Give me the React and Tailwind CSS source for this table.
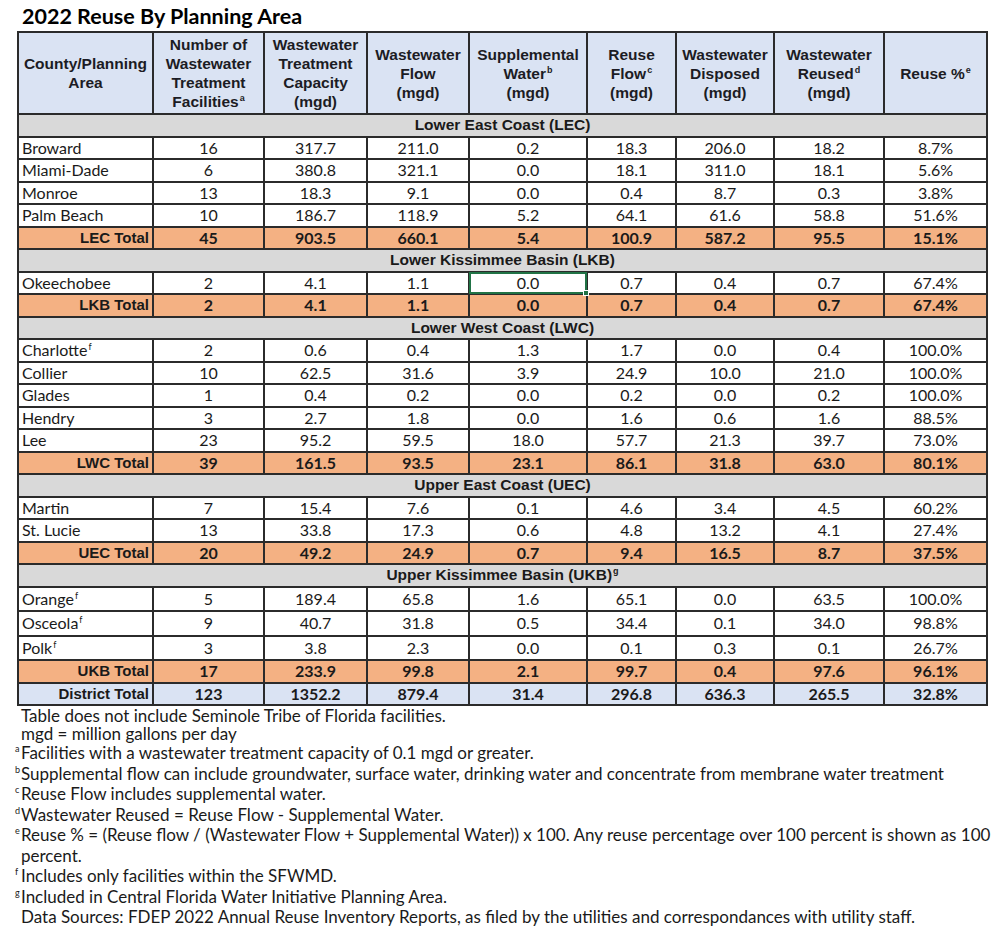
import React from "react";

const sections = [
  {
    title: "Lower East Coast (LEC)",
    rows: [
      ["Broward", "16", "317.7", "211.0", "0.2", "18.3", "206.0", "18.2", "8.7%"],
      ["Miami-Dade", "6", "380.8", "321.1", "0.0", "18.1", "311.0", "18.1", "5.6%"],
      ["Monroe", "13", "18.3", "9.1", "0.0", "0.4", "8.7", "0.3", "3.8%"],
      ["Palm Beach", "10", "186.7", "118.9", "5.2", "64.1", "61.6", "58.8", "51.6%"],
    ],
    total: ["LEC Total", "45", "903.5", "660.1", "5.4", "100.9", "587.2", "95.5", "15.1%"],
  },
  {
    title: "Lower Kissimmee Basin (LKB)",
    rows: [["Okeechobee", "2", "4.1", "1.1", "0.0", "0.7", "0.4", "0.7", "67.4%"]],
    total: ["LKB Total", "2", "4.1", "1.1", "0.0", "0.7", "0.4", "0.7", "67.4%"],
  },
  {
    title: "Lower West Coast (LWC)",
    rows: [
      ["Charlotte", "2", "0.6", "0.4", "1.3", "1.7", "0.0", "0.4", "100.0%", "f"],
      ["Collier", "10", "62.5", "31.6", "3.9", "24.9", "10.0", "21.0", "100.0%"],
      ["Glades", "1", "0.4", "0.2", "0.0", "0.2", "0.0", "0.2", "100.0%"],
      ["Hendry", "3", "2.7", "1.8", "0.0", "1.6", "0.6", "1.6", "88.5%"],
      ["Lee", "23", "95.2", "59.5", "18.0", "57.7", "21.3", "39.7", "73.0%"],
    ],
    total: ["LWC Total", "39", "161.5", "93.5", "23.1", "86.1", "31.8", "63.0", "80.1%"],
  },
  {
    title: "Upper East Coast (UEC)",
    rows: [
      ["Martin", "7", "15.4", "7.6", "0.1", "4.6", "3.4", "4.5", "60.2%"],
      ["St. Lucie", "13", "33.8", "17.3", "0.6", "4.8", "13.2", "4.1", "27.4%"],
    ],
    total: ["UEC Total", "20", "49.2", "24.9", "0.7", "9.4", "16.5", "8.7", "37.5%"],
  },
  {
    title: "Upper Kissimmee Basin (UKB)",
    sup: "g",
    tall: true,
    rows: [
      ["Orange", "5", "189.4", "65.8", "1.6", "65.1", "0.0", "63.5", "100.0%", "f"],
      ["Osceola", "9", "40.7", "31.8", "0.5", "34.4", "0.1", "34.0", "98.8%", "f"],
      ["Polk", "3", "3.8", "2.3", "0.0", "0.1", "0.3", "0.1", "26.7%", "f"],
    ],
    total: ["UKB Total", "17", "233.9", "99.8", "2.1", "99.7", "0.4", "97.6", "96.1%"],
  },
];

const district = ["District Total", "123", "1352.2", "879.4", "31.4", "296.8", "636.3", "265.5", "32.8%"];

const widths = ["w-[135px]", "w-[111px]", "w-[103px]", "w-[102px]", "w-[118px]", "w-[89px]", "w-[98px]", "w-[110px]", "w-[103px]"];

const cell = "border-2 border-[#2b2b2b]";
const label = "font-['Liberation_Sans',Arial,sans-serif]";

// small raised marker, kept off the line box so rows keep their height
function Sup({ children }) {
  return <span className="relative -top-[6px] ml-[1px] text-[9px] leading-none">{children}</span>;
}

function Head({ children }) {
  return (
    <th className={`${cell} ${label} bg-[#dae3f3] text-center align-middle text-[15.5px] leading-[19px] font-bold text-[#1c1c24] px-0`}>
      {children}
    </th>
  );
}

function DataRow({ row, tall, selected }) {
  const [name, ...rest] = row;
  const nums = rest.slice(0, 8);
  const mark = rest[8];
  return (
    <tr className={tall ? "h-[24.5px]" : "h-[22.5px]"}>
      <td className={`${cell} pl-[3px] text-left`}>
        {name}
        {mark && <Sup>{mark}</Sup>}
      </td>
      {nums.map((n, i) => (
        <td key={i} className={`${cell} text-center ${selected && i === 3 ? "relative" : ""}`}>
          {n}
          {selected && i === 3 && (
            <div className="absolute -left-[1px] -top-[1px] -right-[1px] -bottom-[1px] border-2 border-[#217346]">
              <div className="absolute -right-[4px] -bottom-[4px] w-[6px] h-[6px] bg-[#217346] border border-white" />
            </div>
          )}
        </td>
      ))}
    </tr>
  );
}

function TotalRow({ row, bg }) {
  const [name, ...nums] = row;
  return (
    <tr className={`h-[22.5px] ${bg}`}>
      <td className={`${cell} ${label} pr-[3px] text-right font-bold text-[15px]`}>{name}</td>
      {nums.map((n, i) => (
        <td key={i} className={`${cell} text-center font-bold`}>
          {n}
        </td>
      ))}
    </tr>
  );
}

function Note({ mark, children }) {
  return (
    <div className="flex leading-[20.5px]">
      <span className="w-[6px] shrink-0 text-[9px] leading-[12px]">{mark}</span>
      <span>{children}</span>
    </div>
  );
}

export default function App() {
  return (
    <div className="w-[1000px] h-[931px] bg-white pl-[17px] text-[#1a1a1a] font-['Lato','Open_Sans',sans-serif]">
      <h1 className="h-[31px] pl-[5px] pt-[3px] text-[21.5px] leading-[26px] font-bold text-black">
        2022 Reuse By Planning Area
      </h1>

      <table className="w-[969px] table-fixed border-collapse text-[16px] leading-[18px]">
        <colgroup>
          {widths.map((w, i) => (
            <col key={i} className={w} />
          ))}
        </colgroup>
        <thead>
          <tr className="h-[82px]">
            <Head>
              County/Planning
              <br />
              Area
            </Head>
            <Head>
              Number of
              <br />
              Wastewater
              <br />
              Treatment
              <br />
              Facilities<Sup>a</Sup>
            </Head>
            <Head>
              Wastewater
              <br />
              Treatment
              <br />
              Capacity
              <br />
              (mgd)
            </Head>
            <Head>
              Wastewater
              <br />
              Flow
              <br />
              (mgd)
            </Head>
            <Head>
              Supplemental
              <br />
              Water<Sup>b</Sup>
              <br />
              (mgd)
            </Head>
            <Head>
              Reuse
              <br />
              Flow<Sup>c</Sup>
              <br />
              (mgd)
            </Head>
            <Head>
              Wastewater
              <br />
              Disposed
              <br />
              (mgd)
            </Head>
            <Head>
              Wastewater
              <br />
              Reused<Sup>d</Sup>
              <br />
              (mgd)
            </Head>
            <Head>
              Reuse %<Sup>e</Sup>
            </Head>
          </tr>
        </thead>
        <tbody>
          {sections.map((s) => (
            <React.Fragment key={s.title}>
              <tr className="h-[22.5px] bg-[#d9d9d9]">
                <td colSpan={9} className={`${cell} ${label} text-center font-bold text-[15.5px]`}>
                  {s.title}
                  {s.sup && <Sup>{s.sup}</Sup>}
                </td>
              </tr>
              {s.rows.map((r) => (
                <DataRow key={r[0]} row={r} tall={s.tall} selected={r[0] === "Okeechobee"} />
              ))}
              <TotalRow row={s.total} bg="bg-[#f4b183]" />
            </React.Fragment>
          ))}
          <TotalRow row={district} bg="bg-[#dae3f3]" />
        </tbody>
      </table>

      <div className="-ml-[2px] mt-[1px] pr-[6px] text-[17px] text-[#1a1a1a]">
        <div className="pl-[6px] leading-[18px]">
          <div>Table does not include Seminole Tribe of Florida facilities.</div>
          <div>mgd = million gallons per day</div>
        </div>
        <Note mark="a">Facilities with a wastewater treatment capacity of 0.1 mgd or greater.</Note>
        <Note mark="b">
          Supplemental flow can include groundwater, surface water, drinking water and concentrate from membrane water
          treatment
        </Note>
        <Note mark="c">Reuse Flow includes supplemental water.</Note>
        <Note mark="d">Wastewater Reused = Reuse Flow - Supplemental Water.</Note>
        <Note mark="e">
          Reuse % = (Reuse flow / (Wastewater Flow + Supplemental Water)) x 100. Any reuse percentage over 100 percent is
          shown as 100 percent.
        </Note>
        <Note mark="f">Includes only facilities within the SFWMD.</Note>
        <Note mark="g">Included in Central Florida Water Initiative Planning Area.</Note>
        <Note mark="">
          Data Sources: FDEP 2022 Annual Reuse Inventory Reports, as filed by the utilities and correspondances with
          utility staff.
        </Note>
      </div>
    </div>
  );
}
